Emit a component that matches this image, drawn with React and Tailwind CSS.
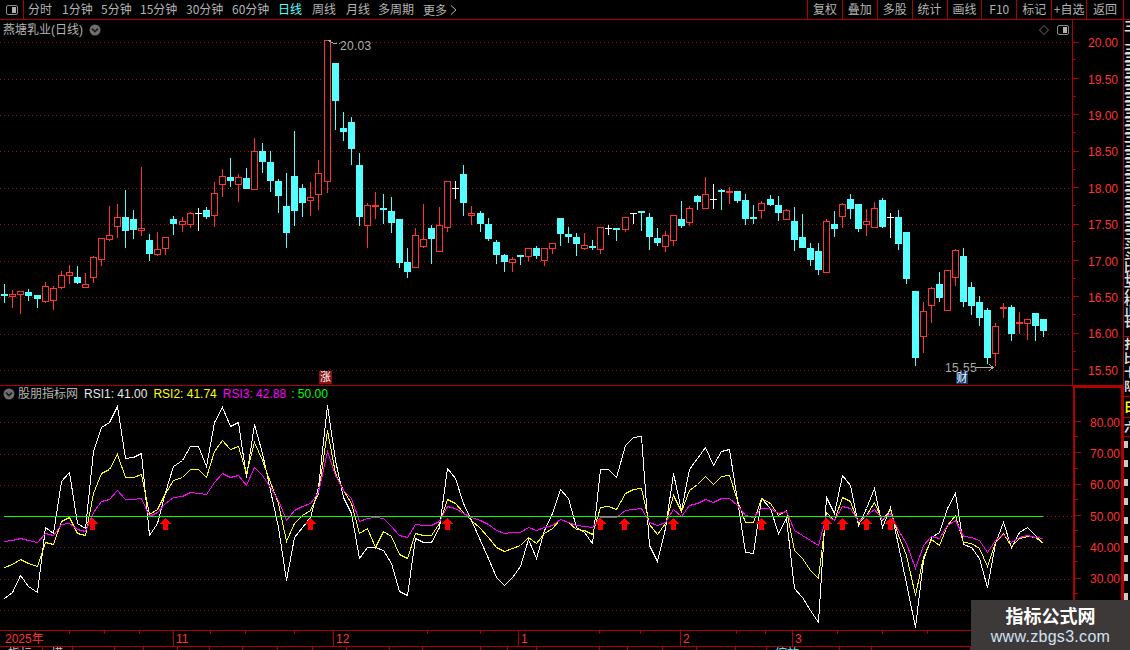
const RED = '#ff3232'
const CYAN = '#55ffff'
const GRID = '#a01010'

// candles read off the chart: [kind, high, bodyTop, bodyBottom, low], y = base + v / 3
const candlesA = [
  ['c',402,432,438,459],['r',420,432,441,474],['r',423,423,435,492],['c',417,426,438,453],['c',435,435,447,474],
  ['r',396,408,456,459],['r',408,414,453,480],['r',363,375,414,417],['r',345,366,378,402],['c',348,381,399,402],
  ['r',369,402,414,414],['r',318,321,384,399],['r',264,264,330,348],['r',168,255,270,273],['r',162,201,231,264],
  ['c',120,201,243,294],['c',180,207,240,267],['r',51,234,243,258],['c',252,270,312,333],['r',246,297,315,318],
  ['r',261,261,297,315],['c',198,207,222,255],['r',201,213,225,246],['r',186,189,225,234],['w',174,189,190,243],
  ['c',171,180,201,207],['r',96,129,198,231],['r',57,78,105,141],['c',24,81,93,111],['r',72,81,105,156],
  ['c',54,84,117,117],['r',-36,3,120,120],['c',-21,3,36,69],['c',3,36,93,126],['c',87,93,138,189],
  ['c',69,168,249,294],['c',-57,78,183,228],['c',102,114,159,201],['r',96,141,153,198],['r',30,69,135,180],
  ['r',-330,-330,96,129],['c',-261,-261,-147,-60],['c',-114,-66,-54,-27],['c',-99,-84,-3,45],['c',9,45,201,228],
  ['r',159,165,228,294],['r',126,165,166,207],
  ['c',132,174,180,222],['c',141,183,219,249],['c',207,207,339,354],['c',294,336,366,384],['r',234,255,354,354],
  ['r',162,267,291,294],['c',225,234,267,342],['r',171,225,306,306],['r',93,93,234,246],['w',93,114,115,147],
  ['c',45,72,159,198],['r',168,189,198,225],['c',183,189,222,246],['c',204,222,267,273],['c',270,276,315,342],
  ['c',312,315,336,366],['r',321,327,339,366],['c',315,315,318,345],['r',294,294,321,333],['c',288,294,318,327],
  ['r',294,294,333,348],['r',279,279,297,312],['c',204,204,252,288],['c',231,252,261,279],['c',249,261,282,318],
  ['r',249,285,297,300],['c',270,288,294,300],['r',231,231,300,312],['w',225,234,235,255],['c',234,234,237,273],
  ['r',201,201,240,246],['w',189,190,191,222],['c',183,183,189,243],['c',189,201,261,300],['c',234,264,279,288],
  ['r',243,255,291,306],['r',195,195,273,288],['c',153,207,228,234],['r',168,174,219,228],['c',135,138,156,180],
  ['r',81,132,177,177],['w',102,147,148,177],['c',117,120,126,180],['f',111,123,129,162],['c',123,123,153,159],
  ['c',132,150,207,225],
].map((c) => [c[0], ...c.slice(1).map((v) => 150 + v / 3)])

const candlesB = [
  ['c',105,141,147,162],['r',93,99,123,147],['c',75,87,105,108],['c',78,105,129,153],['r',117,120,150,150],
  ['c',111,153,210,243],['c',132,201,234,234],['c',219,234,270,288],['c',219,243,300,315],['r',147,153,309,309],
  ['c',123,162,177,201],['r',99,102,141,174],['c',72,87,117,147],['c',102,102,177,186],['r',117,153,165,198],
  ['r',96,114,174,174],['c',84,90,171,174],['w',129,141,142,204],['c',120,141,222,240],['c',186,186,327,342],
  ['c',363,363,564,588],['r',396,423,501,549],['r',351,354,408,459],['c',306,342,384,396],['r',300,300,423,423],
  ['r',237,240,324,348],['c',234,258,396,411],['c',336,351,408,435],['c',378,396,444,468],['c',414,420,564,582],
  ['r',459,468,552,588],['f',399,411,414,444],['c',405,411,492,513],['f',426,456,459,492],['r',447,447,462,510],
  ['c',429,429,468,513],['c',447,447,483,501],
].map((c) => [c[0], ...c.slice(1).map((v) => 170 + v / 3)])

const candles = [...candlesA, ...candlesB]

// rsi values: first 46 with base 380, next 47 with base 400, last 37 with base 400
const joinRsi = (a, b, c) => [...a.map((v) => 380 + v / 3), ...b.map((v) => 400 + v / 3), ...c.map((v) => 400 + v / 3)]

const rsi1 = joinRsi(
  [655,635,586,618,637,440,458,303,277,430,445,212,140,127,78,235,232,219,466,430,335,258,240,198,198,257,125,82,138,127,292,132,220,330,440,600,470,440,410,320,75,240,350,400,535,500],
  [440,450,490,572,585,415,427,427,380,203,235,310,360,420,475,530,556,530,498,418,475,390,340,268,295,380,395,430,208,208,232,135,112,108,435,482,385,220,330,208,175,142,195,152,148,300,455],
  [458,295,325,400,355,565,590,630,665,292,338,225,255,375,325,265,380,320,435,550,680,480,410,395,325,280,432,442,475,562,430,365,440,395,380,405,430],
)
const rsi2 = joinRsi(
  [560,553,538,550,559,487,493,423,410,458,466,340,278,266,222,292,292,283,402,388,340,300,290,268,268,292,212,180,208,198,280,185,240,305,370,482,430,405,390,340,150,280,330,370,458,445],
  [442,392,408,462,475,400,406,406,370,298,310,335,360,385,410,440,454,445,435,410,430,400,383,356,365,386,390,402,320,318,328,280,268,264,372,402,370,286,333,270,252,229,253,228,226,300,365],
  [365,295,310,345,330,450,475,510,535,335,360,290,303,370,345,307,360,328,405,465,585,470,417,435,375,345,425,430,445,498,425,398,437,415,408,412,428],
)
const rsi3 = joinRsi(
  [484,480,475,480,487,460,464,433,430,448,452,395,362,356,330,357,357,354,407,397,370,352,347,337,338,343,305,280,290,286,315,262,285,320,360,420,390,377,370,335,212,285,330,355,422,413],
  [350,355,378,405,412,372,376,376,362,318,325,340,350,360,372,390,398,397,395,382,390,382,375,358,365,376,377,382,350,351,352,330,326,324,365,376,365,328,347,315,308,297,307,295,295,315,345],
  [350,323,325,340,332,390,405,420,436,345,360,318,325,362,345,328,358,340,390,430,503,435,407,415,375,360,408,410,420,456,420,403,425,412,406,410,415],
)

const arrows = [92, 165, 310, 447, 600, 624, 673, 761, 826, 842, 866, 890]
const priceLabels = ['20.00', '19.50', '19.00', '18.50', '18.00', '17.50', '17.00', '16.50', '16.00', '15.50']
const rsiLabels = ['80.00', '70.00', '60.00', '50.00', '40.00', '30.00']
const priceGrid = [42, 79, 115, 151, 188, 224, 261, 297, 334, 370]
const rsiGrid = [422, 454, 485, 547, 579, 610]

const xOf = (n) => Math.round(4.3 + 8.055 * n)
const pointsOf = (vals) => vals.map((v, i) => `${xOf(i) + 0.5},${Math.round(v) + 0.5}`).join(' ')

function Candle({ n, data }) {
  const [kind, hi, top, bot, lo] = data
  const cx = xOf(n)
  const wick = cx + 0.5
  if (kind === 'w') {
    return (
      <g stroke="#ffffff">
        <line x1={wick} x2={wick} y1={hi} y2={lo} />
        <line x1={cx - 3} x2={cx + 4} y1={Math.round(top) + 0.5} y2={Math.round(top) + 0.5} />
      </g>
    )
  }
  if (kind === 'c') {
    return (
      <g>
        <line x1={wick} x2={wick} y1={hi} y2={lo} stroke={CYAN} />
        <rect x={cx - 3} y={Math.round(top)} width={7} height={Math.max(2, Math.round(bot - top))} fill={CYAN} />
      </g>
    )
  }
  if (kind === 'f') {
    return (
      <g>
        <line x1={wick} x2={wick} y1={hi} y2={lo} stroke={RED} />
        <rect x={cx - 3} y={Math.round(top)} width={7} height={2} fill={RED} />
      </g>
    )
  }
  return (
    <g stroke={RED}>
      <line x1={wick} x2={wick} y1={hi} y2={top} />
      <line x1={wick} x2={wick} y1={bot} y2={lo} />
      <rect x={cx - 2.5} y={Math.round(top) + 0.5} width={6} height={Math.max(1, Math.round(bot - top) - 1)} fill="#000" />
    </g>
  )
}

function PanelIcon({ className }) {
  return (
    <svg viewBox="0 0 12 10" width="12" height="10" className={className}>
      <rect x="0.5" y="0.5" width="11" height="9" rx="1.5" fill="none" stroke="#8a8a8a" />
      <rect x="6" y="2" width="4" height="6" fill="#b0b0b0" />
    </svg>
  )
}

function ChevronCircle() {
  return (
    <svg viewBox="0 0 12 12" width="12" height="12">
      <circle cx="6" cy="6" r="5.5" fill="#6e6e6e" />
      <path d="M3 4.6 L6 7.6 L9 4.6" fill="none" stroke="#1c1c1c" strokeWidth="1.6" />
    </svg>
  )
}

function AxisRow({ label, h }) {
  return (
    <div className="relative flex items-center" style={{ height: h }}>
      <span className="w-[6px] h-px bg-[#b00000]" />
      <span className="ml-[9px] mt-[2px] text-[12px] text-[#ff3232] leading-none">{label}</span>
      <span className="absolute left-0 bottom-0 w-[3px] h-px bg-[#b00000]" />
    </div>
  )
}

function Toolbar() {
  const tabs = [
    ['分时', 34], ['1分钟', 39], ['5分钟', 39], ['15分钟', 46], ['30分钟', 46],
    ['60分钟', 46], ['日线', 34], ['周线', 34], ['月线', 32], ['多周期', 45],
  ]
  const buttons = ['复权', '叠加', '多股', '统计', '画线', 'F10', '标记', '+自选']
  return (
    <div className="flex h-[20px] shrink-0 border-b border-[#b00000] text-[12px] leading-[18px] text-[#b4b4b4]">
      <div className="flex w-[24px] items-center justify-center border-r border-[#b00000]">
        <PanelIcon />
      </div>
      <div className="ml-[4px] flex">
        {tabs.map(([t, w]) => (
          <span key={t} className={`whitespace-nowrap ${t === '日线' ? 'text-[#55ffff]' : ''}`} style={{ width: w }}>{t}</span>
        ))}
        <span className="flex items-center">
          更多
          <svg viewBox="0 0 7 10" width="7" height="10" className="ml-[3px]">
            <path d="M1 0.5 L6 5 L1 9.5" fill="none" stroke="#b4b4b4" />
          </svg>
        </span>
      </div>
      <div className="ml-auto mr-[6px] flex w-[317px] border-l border-[#b00000]">
        {buttons.map((b) => (
          <span key={b} className="flex-1 whitespace-nowrap border-r border-[#b00000] text-center">{b}</span>
        ))}
        <span className="w-[37px] shrink-0 border-r border-[#b00000] text-center">返回</span>
      </div>
    </div>
  )
}

function MainPane() {
  return (
    <div className="relative flex h-[366px] shrink-0 border-b border-[#b00000]">
      <svg viewBox="0 20 1072 365" width="1072" height="365" className="block" shapeRendering="crispEdges">
        {priceGrid.map((y) => (
          <line key={y} x1="0" x2="1072" y1={y + 0.5} y2={y + 0.5} stroke={GRID} strokeDasharray="1 3" />
        ))}
        {candles.map((c, i) => (
          <Candle key={i} n={i} data={c} />
        ))}
        <path d="M328 40.5 H331 M329 41 L333 43 H337 M339 43.5 H340" stroke="#b0b0b0" fill="none" />
        <path d="M976 367.5 H993 M989 364 L993 367.5 L989 371" stroke="#b0b0b0" fill="none" />
      </svg>
      <div className="w-[51px] border-l border-[#b00000] pt-[4px]">
        {priceLabels.map((l) => (
          <AxisRow key={l} label={l} h="36.4px" />
        ))}
      </div>

      <div className="absolute left-[3px] top-[2px] flex items-center gap-[6px] text-[12px] leading-[16px] text-[#b4b4b4]">
        <span>燕塘乳业<span className="font-['Liberation_Sans']">(</span>日线<span className="font-['Liberation_Sans']">)</span></span>
        <ChevronCircle />
      </div>
      <svg viewBox="0 0 10 10" width="10" height="10" className="absolute left-[1039px] top-[5px]">
        <path d="M5 0.5 L9.5 5 L5 9.5 L0.5 5 Z" fill="none" stroke="#6e6e6e" />
      </svg>
      <PanelIcon className="absolute left-[1057px] top-[5px]" />

      <span className="absolute left-[340px] top-[18px] text-[12px] tracking-[0.3px] leading-[16px] text-[#b0b0b0]">20.03</span>
      <span className="absolute left-[945px] top-[340px] text-[12px] tracking-[0.4px] leading-[16px] text-[#a8a8a8]">15.55</span>
      <span className="absolute left-[956px] top-[352px] flex h-[12px] w-[12px] items-center justify-center bg-[#0f3c70] text-[11px] leading-none text-white">财</span>
      <span className="absolute left-[319px] top-[351px] flex h-[13px] w-[13px] items-center justify-center bg-[#8a1010] text-[11px] leading-none text-white">涨</span>
    </div>
  )
}

function LowerPane() {
  return (
    <div className="relative flex h-[244px] shrink-0">
      <svg viewBox="0 386 1072 244" width="1072" height="244" className="block" shapeRendering="crispEdges">
        {rsiGrid.map((y) => (
          <line key={y} x1="0" x2="1072" y1={y + 0.5} y2={y + 0.5} stroke={GRID} strokeDasharray="1 3" />
        ))}
        <line x1="1043" x2="1072" y1="516.5" y2="516.5" stroke={GRID} strokeDasharray="1 3" />
        <polyline points={pointsOf(rsi1)} fill="none" stroke="#ffffff" />
        <polyline points={pointsOf(rsi2)} fill="none" stroke="#ffff00" />
        <polyline points={pointsOf(rsi3)} fill="none" stroke="#ff00ff" />
        <line x1="4" x2="1043" y1="516.5" y2="516.5" stroke="#00ff00" />
        {arrows.map((x) => (
          <path key={x} d={`M${x} 518 L${x + 6} 524 H${x + 3} V530 H${x - 2} V524 H${x - 5} Z`} fill="#ff0000" />
        ))}
      </svg>
      <div className="ml-px w-[50px] border-x-2 border-t-2 border-[#b00000] pt-[18px]">
        {rsiLabels.map((l) => (
          <AxisRow key={l} label={l} h="31.3px" />
        ))}
      </div>

      <div className="absolute left-[3px] top-[0px] flex items-center text-[12px] leading-[16px]">
        <ChevronCircle />
        <span className="ml-[3px] text-[#b4b4b4]">股朋指标网</span>
        <span className="ml-[6px] text-[#e6e6e6] font-['Liberation_Sans']">RSI1: 41.00</span>
        <span className="ml-[6px] text-[#ffff00] font-['Liberation_Sans']">RSI2: 41.74</span>
        <span className="ml-[6px] text-[#ff00ff] font-['Liberation_Sans']">RSI3: 42.88</span>
        <span className="ml-[5px] text-[#00ff00] font-['Liberation_Sans']">: 50.00</span>
      </div>
    </div>
  )
}

function TimeBar() {
  const months = [
    { label: '2025年', w: 173 },
    { label: '11', w: 160 },
    { label: '12', w: 185 },
    { label: '1', w: 162 },
    { label: '2', w: 112 },
    { label: '3', w: 331 },
  ]
  const ticks = [69, 104, 139, 210, 245, 294, 427, 480, 599, 640, 736, 765, 837, 882, 927]
  return (
    <div className="relative flex h-[17px] shrink-0 border-y border-[#b00000] text-[12px] leading-[17px] text-[#ff3232]">
      {months.map((m, i) => (
        <div key={m.label} className={i === 0 ? 'pl-[5px]' : 'border-l border-[#b00000] pl-[2px]'} style={{ width: m.w }}>
          {m.label}
        </div>
      ))}
      {ticks.map((x) => (
        <span key={x} className="absolute top-0 h-[3px] w-px bg-[#b00000]" style={{ left: x }} />
      ))}
    </div>
  )
}

function BottomTabs() {
  const stops = [43, 73, 115, 144, 178, 210, 243, 278, 313, 347, 390, 423, 481, 508, 537, 600, 628, 663, 697, 736, 767, 840, 872, 971]
  const names = { 0: '指标', 1: '模板', 21: '缩放' }
  return (
    <div className="flex h-[3px] overflow-hidden text-[12px] leading-[14px] text-[#c8c8c8]">
      {stops.map((x, i) => (
        <div
          key={x}
          className={`shrink-0 border-r border-[#b00000] pl-[8px] ${i === 21 ? 'text-[#55ffff]' : ''}`}
          style={{ width: x - (i ? stops[i - 1] : 0) }}
        >
          {names[i]}
        </div>
      ))}
    </div>
  )
}

function SideColumn() {
  const blocks = [...Array(10)]
  return (
    <div className="w-[6px] overflow-hidden text-[12px] font-bold leading-[8px] text-[#dcdcdc]">
      <div className="h-[25px] border-b border-[#b00000] pt-[2px]">三</div>
      <div className="h-[97px] border-b border-[#b00000] whitespace-pre-line">{'三\n三\n三\n三\n三\n三\n三\n三\n三\n三\n三\n三'}</div>
      <div className="h-[97px] border-b border-[#b00000] whitespace-pre-line">{'三\n三\n三\n三\n三\n三\n三\n三\n三\n三\n三\n三'}</div>
      <div className="h-[98px] border-b border-[#b00000] whitespace-pre-line leading-[11px]">{'斗\n斗\n比\n长\n六\n杉\n止\n长'}</div>
      <div className="h-[60px] border-b border-[#b00000] whitespace-pre-line leading-[14px]">{'扌\n比\n十\n队'}</div>
      <div className="h-[21px] border-b border-[#b00000] pt-[6px] text-[#ffff00]">日</div>
      <div className="h-[19px] border-b border-[#b00000] pt-[5px]">六</div>
      <div className="pt-[4px]">
        {blocks.map((_, i) => (
          <div key={i} className="mb-[12px] h-[7px] w-[4px] bg-[#c8c8c8]" />
        ))}
      </div>
    </div>
  )
}

export default function App() {
  return (
    <div className="relative flex h-[650px] w-[1130px] flex-col overflow-hidden bg-black font-['Noto_Sans_CJK_SC','Liberation_Sans',sans-serif]">
      <Toolbar />
      <div className="flex min-h-0 flex-1">
        <div className="w-[1124px] shrink-0 font-['Liberation_Sans','Noto_Sans_CJK_SC',sans-serif]">
          <div className="border-r border-[#b00000]">
            <MainPane />
            <LowerPane />
            <TimeBar />
            <BottomTabs />
          </div>
        </div>
        <SideColumn />
      </div>

      {/* watermark */}
      <div className="absolute bottom-0 right-0 flex h-[50px] w-[159px] flex-col items-center bg-[#3d3939] pt-[3px]">
        <span className="text-[18px] font-bold leading-[24px] text-white">指标公式网</span>
        <span className="font-['Liberation_Sans'] text-[16px] leading-[20px] tracking-[0.3px] text-[#d3e2f5]">www.zbgs3.com</span>
      </div>
    </div>
  )
}
